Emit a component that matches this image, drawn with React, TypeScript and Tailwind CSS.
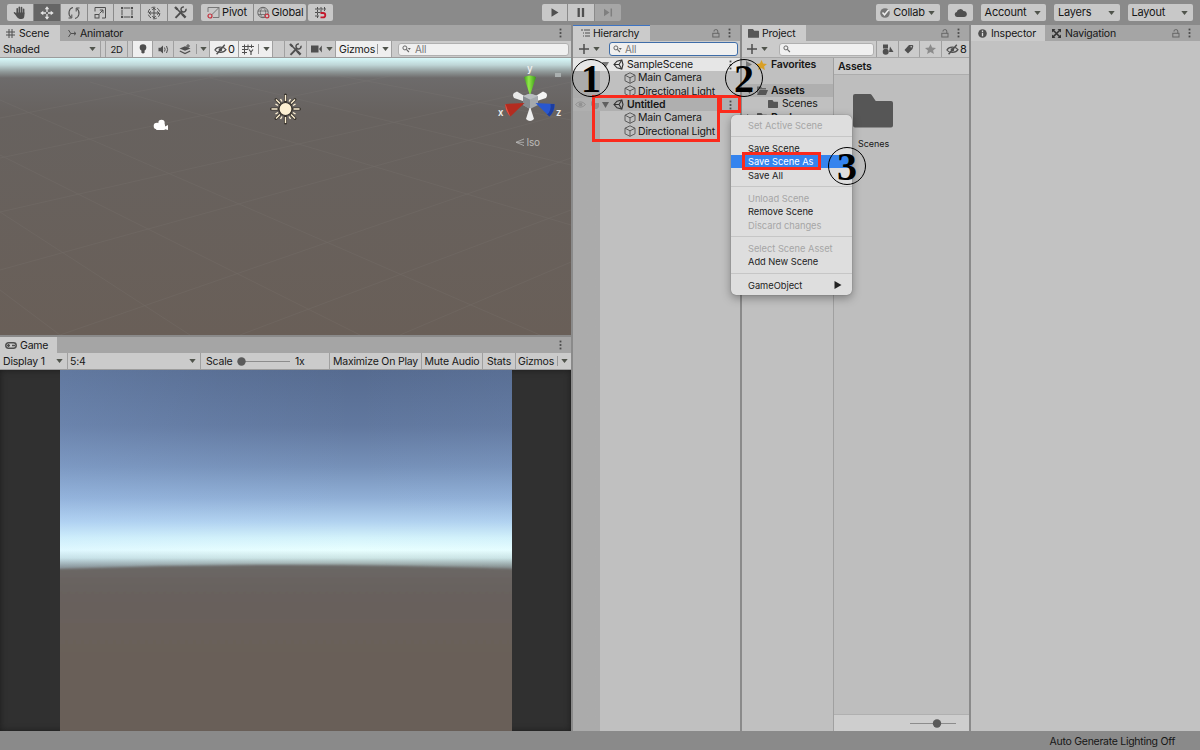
import type { ReactNode } from "react";

const ICON = "#4f4f4f";

function Caret({ className = "" }: { className?: string }) {
  return (
    <svg className={`h-[4px] w-[7px] shrink-0 ${className}`} viewBox="0 0 7 4">
      <path d="M0.3 0h6.4L3.5 4z" fill="#50544c" />
    </svg>
  );
}

function Svg({ w, h, className = "", children }: { w: number; h: number; className?: string; children: ReactNode }) {
  return (
    <svg
      width={w}
      height={h}
      viewBox={`0 0 ${w} ${h}`}
      fill="none"
      stroke={ICON}
      strokeWidth="1"
      className={`shrink-0 ${className}`}
    >
      {children}
    </svg>
  );
}

function Kebab({ className = "" }: { className?: string }) {
  return (
    <Svg w={3} h={10} className={className}>
      <g fill="#4a4a4a" stroke="none">
        <rect x="0.6" y="0.6" width="1.8" height="1.8" />
        <rect x="0.6" y="4.1" width="1.8" height="1.8" />
        <rect x="0.6" y="7.6" width="1.8" height="1.8" />
      </g>
    </Svg>
  );
}

function Lock() {
  return (
    <Svg w={8} h={9}>
      <rect x="0.8" y="4.3" width="6.2" height="3.7" stroke="#666" />
      <path d="M2 2.6V2a1.9 1.4 0 0 1 3.8 0v2.3" stroke="#666" />
    </Svg>
  );
}

function TabActions({ lock = true }: { lock?: boolean }) {
  return (
    <div className="ml-auto flex items-center gap-[8px] pr-[9px]">
      {lock && <Lock />}
      <Kebab />
    </div>
  );
}

function Wrench() {
  return (
    <Svg w={13} h={13}>
      <path d="M2.5 2.5l8.4 8.4" strokeWidth="1.5" />
      <path d="M1 1l2.5 2.5M8 8l3.6 3.6" strokeWidth="2.4" />
      <path d="M1.5 11.8L8.2 5" strokeWidth="1.9" />
      <path d="M11.9 2.8a2.5 2.5 0 1 1-2-1.8" strokeWidth="1.5" />
    </Svg>
  );
}

function EyeOff() {
  return (
    <Svg w={13} h={11}>
      <path d="M0.9 6C3 2.4 9.5 2.2 12 5.6C9.8 9.2 3.2 9.4 0.9 6z" strokeWidth="1.2" />
      <circle cx="6.4" cy="5.8" r="1.8" fill={ICON} stroke="none" />
      <path d="M2.6 10.2L10.8 0.8" strokeWidth="1.4" />
    </Svg>
  );
}

function Search({ caret = false }: { caret?: boolean }) {
  return (
    <Svg w={9} h={8}>
      <circle cx="2.9" cy="2.9" r="2" stroke="#666" />
      <path d="M4.4 4.4l2.5 2.6" stroke="#666" strokeWidth="1.2" />
      {caret && <path d="M5.8 3h3L7.3 5z" fill="#666" stroke="none" />}
    </Svg>
  );
}

function Folder({ className = "h-[9px] w-[11px]" }: { className?: string }) {
  return (
    <svg viewBox="0 0 40 34" preserveAspectRatio="none" className={`shrink-0 ${className}`}>
      <path
        d="M2 0h15q1 0 1.7 1l4 6H38q2 0 2 2v22.5q0 2-2 2H2q-2 0-2-2V2q0-2 2-2z"
        fill="#565656"
      />
    </svg>
  );
}

function UnityLogo({ className = "" }: { className?: string }) {
  return (
    <Svg w={11} h={11} className={className}>
      <path d="M8.8 1L4 2.2L1 5.5L4 8.8L8.8 10L10 5.5z" stroke="#333" strokeWidth="1.1" />
      <path d="M8.8 1L6 5.5L8.8 10M6 5.5H1" stroke="#333" strokeWidth="1.1" />
    </Svg>
  );
}

function Cube() {
  return (
    <Svg w={12} h={12}>
      <path
        d="M6 0.8L11 3.2V8.8L6 11.3L1 8.8V3.2zM1 3.2L6 5.8L11 3.2M6 5.8V11.3"
        stroke="#5c5c5c"
        strokeWidth="1"
      />
    </Svg>
  );
}

function Star({ color }: { color: string }) {
  return (
    <Svg w={11} h={10}>
      <path
        d="M5.5 0L7.1 3.5L11 3.9L8.1 6.4L8.9 10L5.5 8.1L2.1 10L2.9 6.4L0 3.9L3.9 3.5z"
        fill={color}
        stroke="none"
      />
    </Svg>
  );
}

function TopButton({ className = "", children }: { className?: string; children: ReactNode }) {
  return (
    <div className={`flex h-[17px] shrink-0 items-center justify-center bg-[#c8c8c8] ${className}`}>{children}</div>
  );
}

function TopToolbar() {
  return (
    <div className="flex h-[25px] shrink-0 items-start bg-[#8a8a8a] pt-[4px] pl-[7px] text-[11px]">
      <div className="flex gap-px overflow-hidden rounded-[2px]">
        <TopButton className="w-[26px]">
          <Svg w={14} h={14}>
            <path
              d="M4.2 8V2.8M6.3 7V1.2M8.5 7V1.5M10.6 8V3.2M1.5 6.8L4 9.5"
              strokeWidth="1.6"
              strokeLinecap="round"
            />
            <path d="M3.4 6.500h8v3q0 3.500-3 3.500H6.800q-2 0-3.500-3z" fill={ICON} stroke="none" />
          </Svg>
        </TopButton>
        <TopButton className="w-[26px] bg-[#656565]!">
          <Svg w={14} h={14}>
            <path d="M7 3v3M7 8v3M3 7h3M8 7h3" stroke="#e4e4e4" strokeWidth="1.3" />
            <path
              d="M7 0.3L9.3 3.3H4.7zM7 13.7L4.7 10.7h4.6zM0.3 7L3.3 4.7v4.6zM13.7 7L10.7 9.3V4.7z"
              fill="#e4e4e4"
              stroke="none"
            />
          </Svg>
        </TopButton>
        <TopButton className="w-[26px]">
          <Svg w={14} h={14}>
            <path d="M6 1.5C1.5 2.5 0.7 8.5 4 11.3M8 12.5C12.5 11.5 13.3 5.5 10 2.7" strokeWidth="1.1" />
            <path d="M1.5 12h3.3V8.5M12.5 2H9.2v3.5" />
          </Svg>
        </TopButton>
        <TopButton className="w-[25px]">
          <Svg w={13} h={13}>
            <path d="M1 5.5V1.5h10.5v10.5H8" />
            <rect x="1" y="8.5" width="4" height="3.5" />
            <path d="M5.5 7.5L9 4M5.8 4H9v3.2" />
          </Svg>
        </TopButton>
        <TopButton className="w-[26px]">
          <Svg w={14} h={13}>
            <path d="M4 2h6M4 11h6M2 4v5M12 4v5" />
            <g fill={ICON} stroke="none">
              <rect x="1" y="1" width="2.2" height="2.2" />
              <rect x="10.8" y="1" width="2.2" height="2.2" />
              <rect x="1" y="9.8" width="2.2" height="2.2" />
              <rect x="10.8" y="9.8" width="2.2" height="2.2" />
            </g>
          </Svg>
        </TopButton>
        <TopButton className="w-[26px]">
          <Svg w={14} h={14}>
            <circle cx="7" cy="7" r="5.8" strokeDasharray="4 2" />
            <path d="M7 3v8M3 7h8" />
            <path d="M5.3 4L7 2l1.7 2M5.3 10L7 12l1.7-2M4 5.3L2 7l2 1.7M10 5.3L12 7l-2 1.7" />
          </Svg>
        </TopButton>
        <TopButton className="w-[25px]">
          <Wrench />
        </TopButton>
      </div>

      <div className="ml-[8px] flex gap-px overflow-hidden rounded-[2px]">
        <TopButton className="w-[52px] gap-[2px]">
          <Svg w={13} h={13}>
            <path d="M1 6V1.5h11v10H6M4.5 9L12 1.5" stroke="#777" />
            <circle cx="3" cy="10" r="2" stroke="#c4303c" strokeWidth="1.2" />
          </Svg>
          Pivot
        </TopButton>
        <TopButton className="w-[52px] gap-[2px]">
          <Svg w={13} h={13}>
            <circle cx="6" cy="6.5" r="5.2" stroke="#666" />
            <path
              d="M6 1.3C2.5 4 2.5 9 6 11.7C9.5 9 9.5 4 6 1.3zM1 5h10M1 8.5h7"
              stroke="#666"
              strokeWidth="0.8"
            />
            <circle cx="10" cy="10" r="1.9" stroke="#c4303c" strokeWidth="1.2" fill="#c8c8c8" />
          </Svg>
          Global
        </TopButton>
      </div>
      <TopButton className="ml-[2px] w-[25px] rounded-[2px]">
        <Svg w={13} h={13}>
          <path d="M3.5 1v11M7 1v5M10.5 1v4M1 3h11M1 6.5h6M1 10h4" strokeDasharray="2.5 0.5" />
          <path d="M6.5 7H9q2.3 0 2.3 2.2T9 11.4H6.5" stroke="#c4182c" strokeWidth="1.8" />
        </Svg>
      </TopButton>

      <div className="ml-[209px] flex gap-px overflow-hidden rounded-[2px]">
        <TopButton className="w-[25px]">
          <Svg w={8} h={9}>
            <path d="M0.5 0.3L7.5 4.5L0.5 8.7z" fill={ICON} stroke="none" />
          </Svg>
        </TopButton>
        <TopButton className="w-[26px]">
          <Svg w={8} h={9}>
            <path d="M1.7 0v9M6 0v9" strokeWidth="2.3" />
          </Svg>
        </TopButton>
        <TopButton className="w-[26px] bg-[#a6a6a6]!">
          <Svg w={10} h={9}>
            <path d="M1 0.8L6.5 4.5L1 8.2z" fill="#7f7f7f" stroke="none" />
            <path d="M8.3 0.5v8" stroke="#7f7f7f" strokeWidth="1.5" />
          </Svg>
        </TopButton>
      </div>

      <div className="mr-[7px] ml-auto flex">
        <TopButton className="w-[64px] gap-[3px] rounded-[2px]">
          <Svg w={10} h={10}>
            <circle cx="5" cy="5" r="4.8" fill="#777" stroke="none" />
            <path d="M2.5 4.5l2 2.3L8.7 1.8" stroke="#eee" strokeWidth="1.5" />
          </Svg>
          Collab
          <Caret />
        </TopButton>
        <TopButton className="ml-[8px] w-[25px] rounded-[2px]">
          <Svg w={13} h={9}>
            <path d="M3 9a2.6 2.6 0 0 1-.3-5.1A3.7 3.7 0 0 1 9.5 3 3 3 0 0 1 10.2 9z" fill={ICON} stroke="none" />
          </Svg>
        </TopButton>
        {["Account", "Layers", "Layout"].map((label) => (
          <TopButton key={label} className="ml-[8px] w-[65.5px] justify-between! rounded-[2px] pr-[5px] pl-[4px]">
            {label}
            <Caret />
          </TopButton>
        ))}
      </div>
    </div>
  );
}

function TabBar({ children }: { children: ReactNode }) {
  return <div className="flex h-[16px] shrink-0 items-stretch bg-[#a5a5a5]">{children}</div>;
}

function Tool({ className = "", on = false, children }: { className?: string; on?: boolean; children?: ReactNode }) {
  return (
    <div
      className={`flex h-full shrink-0 items-center border-r border-[#a0a0a0] ${on ? "bg-[#efefef]" : ""} ${className}`}
    >
      {children}
    </div>
  );
}

function ScenePanel() {
  return (
    <div className="flex h-[310px] shrink-0 flex-col">
      <TabBar>
        <div className="flex w-[60px] items-center gap-[4px] bg-[#cbcbcb] pl-[6px]">
          <Svg w={9} h={9}>
            <path d="M3 0v9M6 0v9M0 3h9M0 6h9" />
          </Svg>
          Scene
        </div>
        <div className="flex items-center gap-[3px] pl-[8px]">
          <Svg w={9} h={9}>
            <path d="M0.5 1l2.3 3.5L0.5 8M2.8 4.5H8M6 2.8l2 1.7l-2 1.7" />
          </Svg>
          Animator
        </div>
        <TabActions lock={false} />
      </TabBar>
      <div className="flex h-[17px] shrink-0 items-center border-b border-[#9c9c9c] bg-[#cbcbcb]">
        <Tool className="w-[101px] justify-between pr-[4px] pl-[3px]">
          <span>Shaded</span>
          <Caret />
        </Tool>
        <Tool className="w-[5px]" />
        <Tool className="w-[22px] justify-center text-[9.5px]">2D</Tool>
        <Tool className="w-[5px]" />
        <Tool on className="w-[20px] justify-center">
          <Svg w={8} h={10}>
            <circle cx="4" cy="3.5" r="3.3" fill={ICON} stroke="none" />
            <path d="M2.4 5.5h3.2v3.2q-1.6 1.6-3.2 0z" fill={ICON} stroke="none" />
          </Svg>
        </Tool>
        <Tool className="w-[21px] justify-center">
          <Svg w={11} h={9}>
            <path d="M0.5 2.8h2L5 0.5v8L2.5 6.2h-2z" fill={ICON} stroke="none" />
            <path d="M6.5 2.5q1.2 2 0 4M8.5 1q2.2 3.5 0 7" />
          </Svg>
        </Tool>
        <Tool className="w-[36px] gap-[5px] pl-[5px]">
          <Svg w={12} h={11}>
            <path d="M0.5 4.5L6 6.7L11.5 4.5L6 2.3z" fill={ICON} stroke="none" />
            <path d="M0.8 7L6 9.5L11.2 7" strokeWidth="1.3" />
            <path d="M9 0v4M7 2h4" />
          </Svg>
          <span className="h-[10px] w-px bg-[#999]" />
          <Caret className="ml-[-2px]" />
        </Tool>
        <Tool on className="w-[29px] gap-[1px] pl-[4px]">
          <EyeOff />
          <span className="text-[11px]">0</span>
        </Tool>
        <Tool on className="w-[34px] gap-[4px] pl-[3px]">
          <Svg w={12} h={11}>
            <path d="M2.5 0.5v10M6 0.5v5M9.5 0.5V4M0 2.5h12M0 5.5h6M0 8.5h5" />
            <path d="M7 5.5l2 2.5l2-2.5M9 8v3" strokeWidth="1.2" />
          </Svg>
          <span className="h-[10px] w-px bg-[#999]" />
          <Caret />
        </Tool>
        <Tool className="w-[12px]" />
        <Tool className="w-[22px] justify-center">
          <Wrench />
        </Tool>
        <Tool className="w-[29px] gap-[4px] pl-[4px]">
          <Svg w={11} h={8}>
            <rect y="0.5" width="7.5" height="7" fill={ICON} stroke="none" />
            <path d="M8 4L10.8 0.5v7z" fill={ICON} stroke="none" />
          </Svg>
          <Caret />
        </Tool>
        <Tool on className="w-[56px] gap-[4px] pl-[3px]">
          <span className="w-[34px]">Gizmos</span>
          <span className="h-[10px] w-px bg-[#999]" />
          <Caret />
        </Tool>
        <div className="ml-[6px] flex h-[13px] flex-1 items-center gap-[4px] rounded-[3px] border border-[#b0b0b0] bg-[#f0f0f0] pl-[3px] text-[10px] text-[#777]">
          <Search caret />
          All
        </div>
        <div className="w-[2px]" />
      </div>
      <SceneView />
    </div>
  );
}

function SceneView() {
  return (
    <svg className="block h-[277px] w-[571px]" viewBox="0 58 571 277">
      <defs>
        <linearGradient id="sceneSky" x1="0" y1="58" x2="0" y2="335" gradientUnits="userSpaceOnUse">
          <stop offset="0" stopColor="#d8f9fa" />
          <stop offset="0.025" stopColor="#bfd6d7" />
          <stop offset="0.05" stopColor="#8f9898" />
          <stop offset="0.072" stopColor="#6d6b6b" />
          <stop offset="0.2" stopColor="#67625f" />
          <stop offset="1" stopColor="#695f58" />
        </linearGradient>
        <linearGradient id="green" x1="0" x2="1">
          <stop offset="0" stopColor="#3f9e1c" />
          <stop offset="0.4" stopColor="#90e848" />
          <stop offset="1" stopColor="#3a9a18" />
        </linearGradient>
      </defs>
      <rect y="58" width="571" height="277" fill="url(#sceneSky)" />
      <g stroke="#8a8581" strokeWidth="0.7" opacity="0.22">
        <path d="M0 118L240 72M0 158L390 76M0 212L571 82M0 270L571 112M60 335L571 158M240 335L571 210M400 335L571 262" />
        <path d="M571 120L330 74M571 165L210 78M571 225L90 82M540 335L0 100M360 335L0 155M190 335L0 212M60 335L0 290" />
      </g>
      <g fill="#fff">
        <circle cx="157" cy="126" r="3.3" />
        <circle cx="161.5" cy="123" r="3.2" />
        <rect x="156" y="124" width="9" height="6" rx="1" />
        <path d="M164 127l4-2v5l-4-1z" />
      </g>
      <path
        d="M285.5 95v7M285.5 116v7M271.5 109h7M292.5 109h7M276 99.5l4 4M291 114.5l4 4M276 118.5l4-4M291 103.5l4-4"
        stroke="#39342e"
        strokeWidth="3"
        strokeLinecap="round"
      />
      <path
        d="M285.5 95v6M285.5 117v6M271.5 109h6M293.5 109h6M276 99.5l4 4M291 114.5l4 4M276 118.5l4-4M291 103.5l4-4M280.5 99l1.5 2.5M290.5 99l-1.5 2.5M280.5 119l1.5-2.5M290.5 119l-1.5-2.5M275.5 104l2.5 1.5M275.5 114l2.5-1.5M295.5 104l-2.5 1.5M295.5 114l-2.5-1.5"
        stroke="#fdf0d2"
        strokeWidth="1.4"
      />
      <circle cx="285.5" cy="109" r="6.5" fill="#fdf0d2" stroke="#39342e" strokeWidth="1.2" />
      <g>
        <path d="M514 93l3-1.5L526 97l-3 4l-9-3q-2-3 0-5z" fill="#e9e9e9" />
        <path d="M546 93l-3-1.5L534 97l3 4l9-3q2-3 0-5z" fill="#f4f4f4" />
        <path d="M523 96l7-2.5L538 96v9l-8 4l-7-4z" fill="#a5a9ad" />
        <path d="M523 96l7 3.5v9.5l-7-4z" fill="#868b90" />
        <path d="M523 96l7-2.5L538 96l-8 3.5z" fill="#b9bdc0" />
        <path d="M524 77q6-3 12 0L530.5 94h-1z" fill="url(#green)" />
        <path d="M524.5 103L505.5 104q-1 6 5 12.5z" fill="#b32c20" />
        <path d="M505.5 104q2.5 8 5 12.5l-2-2q-4-6-3-10.5z" fill="#e05545" />
        <path d="M535.5 103L554.5 104q1 6-5 12.5z" fill="#2857cf" />
        <path d="M549.5 116.5q5-5 5-12.5l-4 0q1 7-3.5 10.5z" fill="#1c3da0" />
        <path d="M529.5 108h1l3.5 11q-4 4-8 0z" fill="#eeeeee" />
      </g>
      <g fill="#eee" fontSize="9.5" fontWeight="600" fontFamily="Inter, sans-serif">
        <text x="527" y="71.5">y</text>
        <text x="498" y="116">x</text>
        <text x="556" y="116">z</text>
      </g>
      <path d="M524 139l-8 3.3l8 3.3M516 142.3h8" fill="none" stroke="#bbb" strokeWidth="0.8" />
      <text x="526.5" y="146" fill="#bdbab8" fontSize="10" fontFamily="Inter, sans-serif">Iso</text>
      <rect x="555" y="73" width="6" height="4" fill="#aab0b0" />
    </svg>
  );
}

function GameView() {
  return (
    <svg className="block h-[361px] w-[452px]" viewBox="0 0 452 361" preserveAspectRatio="none">
      <defs>
        <linearGradient id="sky" x1="0" y1="0" x2="0" y2="200" gradientUnits="userSpaceOnUse">
          <stop offset="0" stopColor="#566b90" />
          <stop offset="0.28" stopColor="#61789f" />
          <stop offset="0.48" stopColor="#7590b8" />
          <stop offset="0.64" stopColor="#90afd6" />
          <stop offset="0.76" stopColor="#b2d3f0" />
          <stop offset="0.84" stopColor="#d4f3fb" />
          <stop offset="0.9" stopColor="#e8ffff" />
          <stop offset="0.94" stopColor="#cce5e5" />
          <stop offset="0.98" stopColor="#8f9a99" />
          <stop offset="1" stopColor="#7c8281" />
        </linearGradient>
        <linearGradient id="light" x1="0" x2="1">
          <stop offset="0" stopColor="#a8ccff" stopOpacity="0.14" />
          <stop offset="0.35" stopColor="#a8ccff" stopOpacity="0.05" />
          <stop offset="0.65" stopColor="#a8ccff" stopOpacity="0" />
          <stop offset="1" stopColor="#a8ccff" stopOpacity="0.04" />
        </linearGradient>
        <linearGradient id="ground" x1="0" y1="193" x2="0" y2="361" gradientUnits="userSpaceOnUse">
          <stop offset="0" stopColor="#6c6867" />
          <stop offset="0.15" stopColor="#68625e" />
          <stop offset="0.4" stopColor="#69605a" />
          <stop offset="1" stopColor="#695f58" />
        </linearGradient>
        <filter id="soft" x="-5%" y="-5%" width="110%" height="110%">
          <feGaussianBlur stdDeviation="1" />
        </filter>
      </defs>
      <rect width="452" height="210" fill="url(#sky)" />
      <rect width="452" height="200" fill="url(#light)" />
      <path d="M-20 199.5Q226 190.5 472 199.5V390H-20z" fill="url(#ground)" filter="url(#soft)" />
    </svg>
  );
}

function GamePanel() {
  return (
    <div className="mt-[2px] flex flex-1 flex-col">
      <TabBar>
        <div className="flex w-[57px] items-center gap-[3px] bg-[#cbcbcb] pl-[5px]">
          <Svg w={12} h={7}>
            <rect x="0.8" y="0.8" width="10.4" height="5.4" rx="2.7" strokeWidth="1.5" />
            <path d="M2 3.5h3M3.5 2v3M7 3.5h3" strokeWidth="1.3" />
          </Svg>
          Game
        </div>
        <TabActions lock={false} />
      </TabBar>
      <div className="flex h-[17px] shrink-0 items-center border-b border-[#9c9c9c] bg-[#cbcbcb]">
        <Tool className="w-[68px] justify-between pr-[4px] pl-[3px]">
          <span>Display 1</span>
          <Caret />
        </Tool>
        <Tool className="w-[133px] justify-between pr-[4px] pl-[2px]">
          <span>5:4</span>
          <Caret />
        </Tool>
        <Tool className="w-[129px] pl-[5px]">
          <span className="w-[27px]">Scale</span>
          <Svg w={53} h={9} className="ml-[4px]">
            <path d="M4 4.5h49" stroke="#8c8c8c" />
            <circle cx="4.5" cy="4.5" r="4.2" fill="#5a5a5a" stroke="none" />
          </Svg>
          <span className="ml-[5px]">1x</span>
        </Tool>
        <Tool className="w-[92px] justify-center">Maximize On Play</Tool>
        <Tool className="w-[61px] justify-center">Mute Audio</Tool>
        <Tool className="w-[33px] justify-center">Stats</Tool>
        <div className="flex items-center gap-[3px] pl-[2px]">
          <span className="w-[36px]">Gizmos</span>
          <span className="h-[10px] w-px bg-[#999]" />
          <Caret />
        </div>
      </div>
      <div className="flex flex-1 justify-center bg-[#303030] pr-[1px] pl-[2px] shadow-[inset_0_0_6px_#1c1c1c]">
        <GameView />
      </div>
    </div>
  );
}

function TreeItem({ name }: { name: string }) {
  return (
    <div className="flex h-[13.33px] items-center gap-[2px] pl-[51px]">
      <Cube />
      {name}
    </div>
  );
}

function HierarchyPanel() {
  return (
    <div className="flex w-[167px] shrink-0 flex-col bg-[#c0c0c0]">
      <TabBar>
        <div className="flex w-[77px] items-center gap-[3px] bg-[#cbcbcb] pl-[8px] shadow-[inset_0_1px_0_#3d74c4]">
          <Svg w={9} h={8}>
            <path d="M0 1h2M3 1h6M2 4h1M4 4h5M2 7h1M4 7h5" />
          </Svg>
          Hierarchy
        </div>
        <TabActions />
      </TabBar>
      <div className="flex h-[17px] shrink-0 items-center border-b border-[#a8a8a8] bg-[#cbcbcb] pl-[6px]">
        <Svg w={10} h={10}>
          <path d="M5 0v10M0 5h10" strokeWidth="1.5" />
        </Svg>
        <Caret className="ml-[4px]" />
        <div className="ml-[9px] flex h-[14px] w-[129px] items-center gap-[3px] rounded-[3px] border border-[#3f6da8] bg-[#f0f0f0] pl-[3px] text-[10px] text-[#777]">
          <Search caret />
          All
        </div>
      </div>
      <div className="flex-1 bg-linear-to-r from-[#ababab] from-[27px] to-[#c0c0c0] to-[27px]">
        <div className="flex h-[13.33px] items-center bg-[#e6e6e6] pl-[29px]">
          <Svg w={7} h={6}>
            <path d="M0 0h7L3.5 6z" fill="#777" stroke="none" />
          </Svg>
          <UnityLogo className="ml-[4px]" />
          <span className="ml-[3px]">SampleScene</span>
          <Kebab className="mr-[8px] ml-auto" />
        </div>
        <TreeItem name="Main Camera" />
        <TreeItem name="Directional Light" />
        <div className="flex h-[13.33px] items-center bg-[#afafaf] pl-[2px] font-semibold">
          <Svg w={11} h={9}>
            <path d="M0.5 4.5Q5.5-1 10.5 4.5Q5.5 10 0.5 4.5z" stroke="#929292" />
            <circle cx="5.5" cy="4.5" r="2" fill="#929292" stroke="none" />
          </Svg>
          <Svg w={10} h={9} className="ml-[4px]">
            <path d="M1 1l3 2l5 0v4l-2 2H4L1 5z" fill="#929292" stroke="none" />
          </Svg>
          <Svg w={7} h={6} className="ml-[2px]">
            <path d="M0 0h7L3.5 6z" fill="#606060" stroke="none" />
          </Svg>
          <UnityLogo className="ml-[4px]" />
          <span className="ml-[3px]">Untitled</span>
          <Kebab className="mr-[8px] ml-auto" />
        </div>
        <TreeItem name="Main Camera" />
        <TreeItem name="Directional Light" />
      </div>
    </div>
  );
}

function ProjectPanel() {
  return (
    <div className="flex w-[227px] shrink-0 flex-col bg-[#c0c0c0]">
      <TabBar>
        <div className="flex w-[64px] items-center gap-[3px] bg-[#cbcbcb] pl-[6px]">
          <Folder />
          Project
        </div>
        <TabActions />
      </TabBar>
      <div className="flex h-[17px] shrink-0 items-center border-b border-[#a8a8a8] bg-[#cbcbcb] pl-[5px]">
        <Svg w={10} h={10}>
          <path d="M5 0v10M0 5h10" strokeWidth="1.5" />
        </Svg>
        <Caret className="ml-[4px]" />
        <div className="ml-[11px] flex h-[13px] w-[95px] items-center rounded-[3px] border border-[#b0b0b0] bg-[#f0f0f0] pl-[3px]">
          <Search />
        </div>
        <div className="ml-auto flex h-full border-l border-[#a0a0a0]">
          <Tool className="w-[22px] justify-center">
            <Svg w={12} h={11}>
              <g fill={ICON} stroke="none">
                <rect x="1" y="0.5" width="5" height="4" />
                <circle cx="3.7" cy="7.7" r="3" />
                <path d="M8 2.5L11.5 8H7z" />
              </g>
            </Svg>
          </Tool>
          <Tool className="w-[21px] justify-center">
            <Svg w={10} h={10}>
              <path d="M5 1h3.5q1 0 .7 1.5L8.5 5L4 9.5L0.5 6z" fill={ICON} stroke="none" />
              <circle cx="7.2" cy="2.8" r="0.8" fill="#cbcbcb" stroke="none" />
            </Svg>
          </Tool>
          <Tool className="w-[22px] justify-center">
            <Star color="#8b8b8b" />
          </Tool>
          <div className="flex w-[27px] items-center gap-[1px] pl-[4px]">
            <EyeOff />
            <span className="text-[11px]">8</span>
          </div>
        </div>
      </div>
      <div className="flex flex-1">
        <div className="w-[91px] font-semibold">
          <div className="flex h-[13px] items-center gap-[4px] pl-[4px]">
            <Svg w={6} h={7}>
              <path d="M0 0L6 3.5L0 7z" fill="#777" stroke="none" />
            </Svg>
            <Star color="#d9a026" />
            Favorites
          </div>
          <div className="mt-[13px] flex h-[13px] items-center gap-[3px] bg-[#afafaf] pl-[4px]">
            <Svg w={7} h={6}>
              <path d="M0 0h7L3.5 6z" fill="#606060" stroke="none" />
            </Svg>
            <Svg w={12} h={9}>
              <path d="M1 0.5h4l1 1.5h4v1.5H3L1 8z" fill="#666" stroke="none" />
              <path d="M3.5 4H12L10 9H1z" fill="#565656" stroke="none" />
            </Svg>
            Assets
          </div>
          <div className="flex h-[13.5px] items-center gap-[4px] pl-[26px] font-normal">
            <Folder className="h-[8px] w-[10px]" />
            Scenes
          </div>
          <div className="flex h-[13.5px] items-center gap-[4px] pl-[5px]">
            <Svg w={6} h={7}>
              <path d="M0 0L6 3.5L0 7z" fill="#606060" stroke="none" />
            </Svg>
            <Folder className="h-[8px] w-[10px]" />
            Packages
          </div>
        </div>
        <div className="flex flex-1 flex-col border-l border-[#a0a0a0] bg-[#bebebe]">
          <div className="flex h-[17px] items-center border-b border-[#adadad] bg-[#cbcbcb] pl-[4px] font-semibold">
            Assets
          </div>
          <div className="flex flex-1 flex-col items-start pt-[19px] pl-[19px]">
            <Folder className="h-[34px] w-[40px]" />
            <span className="mt-[9px] ml-[5px] text-[9px] leading-[14px] tracking-[-0.05px]">Scenes</span>
          </div>
          <div className="flex h-[17px] items-center justify-end border-t border-[#b0b0b0] bg-[#cecece] pr-[13px]">
            <Svg w={46} h={9}>
              <path d="M0 4.5h46" stroke="#8c8c8c" />
              <circle cx="27" cy="4.5" r="4.2" fill="#5a5a5a" stroke="none" />
            </Svg>
          </div>
        </div>
      </div>
    </div>
  );
}

function InspectorPanel() {
  return (
    <div className="flex flex-1 flex-col bg-[#c2c2c2]">
      <TabBar>
        <div className="flex w-[74px] items-center gap-[4px] bg-[#cbcbcb] pl-[7px]">
          <Svg w={9} h={9}>
            <circle cx="4.5" cy="4.5" r="4.3" fill={ICON} stroke="none" />
            <path d="M4.5 1.6v1.3M4.5 3.8v3.5" stroke="#ddd" strokeWidth="1.3" />
          </Svg>
          Inspector
        </div>
        <div className="flex items-center gap-[4px] pl-[7px]">
          <Svg w={9} h={9}>
            <path d="M1 1l7 7M8 1L1 8" strokeWidth="1.6" stroke="#333" />
            <path
              d="M0 0h3.5L0 3.5zM9 0v3.5L5.5 0zM0 9V5.5L3.5 9zM9 9H5.5L9 5.5z"
              fill="#333"
              stroke="none"
            />
          </Svg>
          Navigation
        </div>
        <TabActions />
      </TabBar>
    </div>
  );
}

type MenuItem = { label: string; state?: "disabled" | "active" | "submenu" };

const MENU: MenuItem[][] = [
  [{ label: "Set Active Scene", state: "disabled" }],
  [{ label: "Save Scene" }, { label: "Save Scene As", state: "active" }, { label: "Save All" }],
  [
    { label: "Unload Scene", state: "disabled" },
    { label: "Remove Scene" },
    { label: "Discard changes", state: "disabled" },
  ],
  [{ label: "Select Scene Asset", state: "disabled" }, { label: "Add New Scene" }],
  [{ label: "GameObject", state: "submenu" }],
];

function itemColor(state?: string) {
  if (state === "disabled") return "text-[#a6a6a6]";
  if (state === "active") return "bg-[#3584ee] text-white";
  return "text-[#222]";
}

function ContextMenu() {
  return (
    <div className="absolute top-[115px] left-[731px] w-[121px] rounded-[5px] bg-[#dedede] py-[3.5px] text-[9.3px] tracking-[-0.02px] shadow-[0_3px_10px_rgba(0,0,0,0.35),0_0_1px_rgba(0,0,0,0.5)]">
      {MENU.map((group, i) => (
        <div key={i}>
          {i > 0 && (
            <div className="flex h-[10px] items-center">
              <div className="h-px w-full bg-[#c6c6c6]" />
            </div>
          )}
          {group.map((item) => (
            <div
              key={item.label}
              className={`flex h-[13.33px] items-center justify-between pr-[10px] pl-[17px] ${itemColor(item.state)}`}
            >
              {item.label}
              {item.state === "submenu" && (
                <Svg w={8} h={8}>
                  <path d="M0.5 0L7.5 4L0.5 8z" fill="#222" stroke="none" />
                </Svg>
              )}
            </div>
          ))}
        </div>
      ))}
    </div>
  );
}

function Step({ n, className }: { n: number; className: string }) {
  return (
    <div
      className={`absolute flex h-[38px] w-[38px] items-center justify-center rounded-full border border-black pt-[2px] font-['Liberation_Serif',serif] text-[40px] leading-none font-bold tracking-normal text-black ${className}`}
    >
      {n}
    </div>
  );
}

export default function App() {
  return (
    <div className="relative flex h-[750px] w-[1200px] flex-col overflow-hidden bg-[#8a8a8a] font-[Inter,sans-serif] text-[10.5px] leading-[11px] tracking-[-0.2px] whitespace-nowrap text-[#161616]">
      <TopToolbar />
      <div className="flex h-[706px] shrink-0 gap-[2px]">
        <div className="flex w-[571px] shrink-0 flex-col">
          <ScenePanel />
          <GamePanel />
        </div>
        <HierarchyPanel />
        <ProjectPanel />
        <InspectorPanel />
      </div>
      <div className="flex flex-1 items-center justify-end pt-[2px] pr-[25px] tracking-[-0.28px]">
        Auto Generate Lighting Off
      </div>

      <ContextMenu />

      {/* Step annotations */}
      <div className="absolute top-[95px] left-[592px] h-[47px] w-[128px] border-[3px] border-[#fb2a1c]" />
      <div className="absolute top-[95px] left-[719px] h-[18px] w-[22px] border-[3px] border-[#fb2a1c]" />
      <div className="absolute top-[152px] left-[742px] h-[18px] w-[79px] border-[3px] border-[#fb2a1c]" />
      <Step n={1} className="top-[59px] left-[572px]" />
      <Step n={2} className="top-[59px] left-[725px]" />
      <Step n={3} className="top-[147px] left-[828px]" />
    </div>
  );
}
